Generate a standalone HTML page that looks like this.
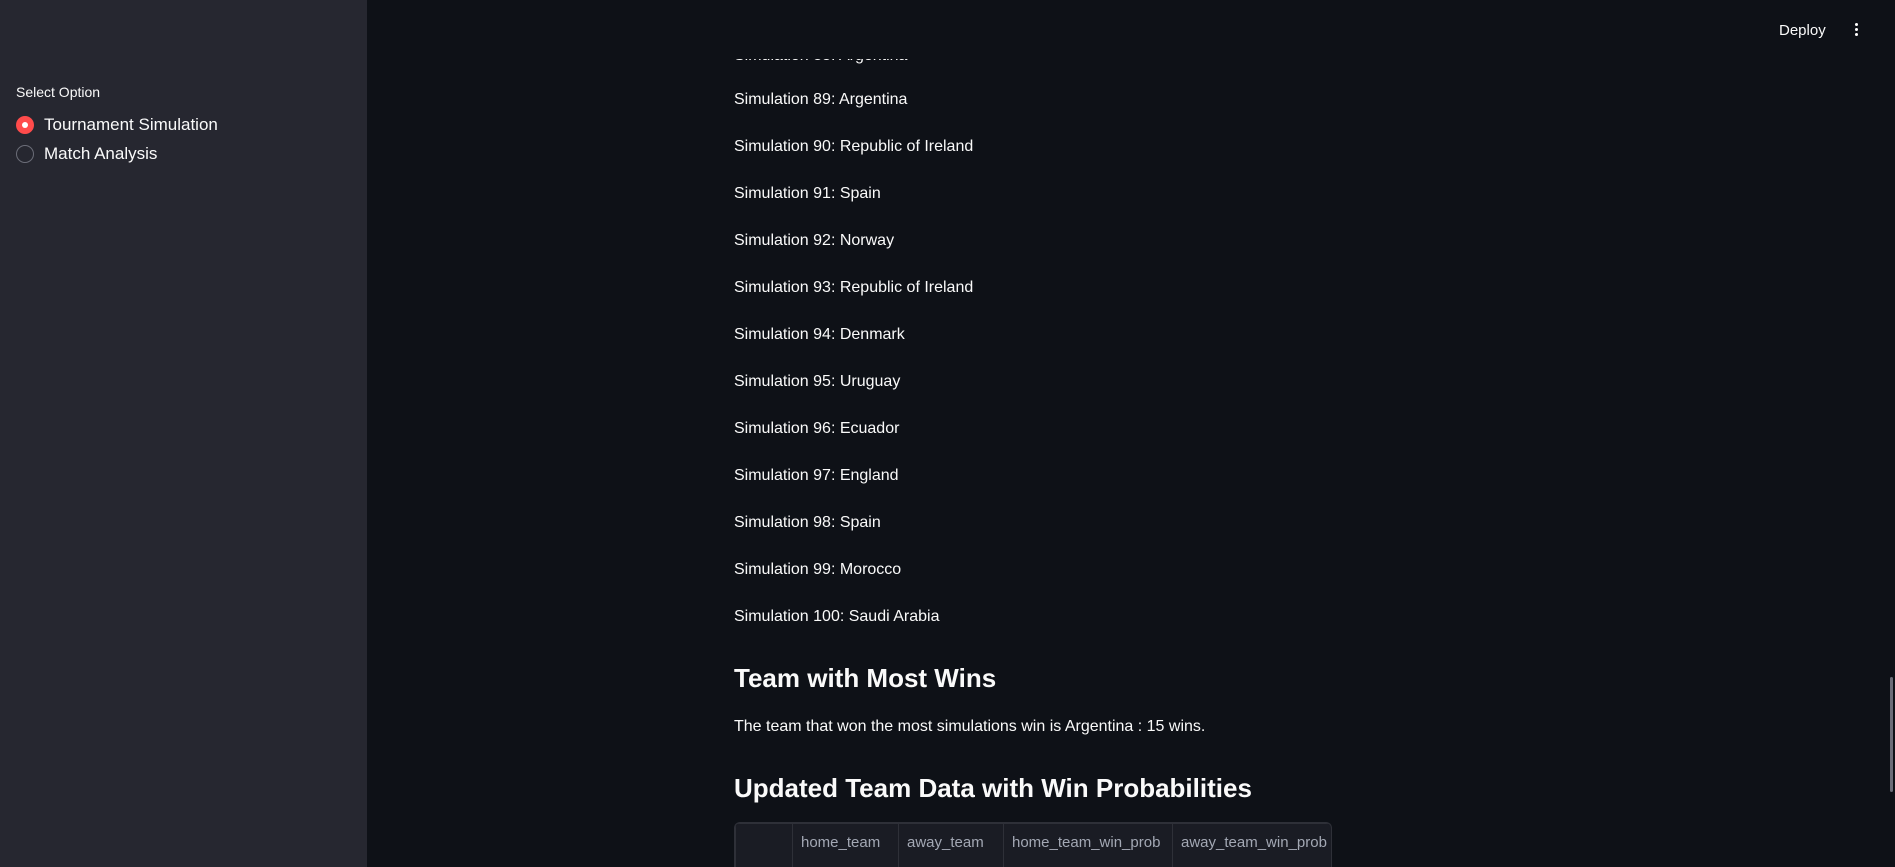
<!DOCTYPE html>
<html><head><meta charset="utf-8"><style>
*{margin:0;padding:0;box-sizing:border-box}
html,body{width:1895px;height:867px;overflow:hidden}
body{background:#0e1117;color:#fafafa;font-family:"Liberation Sans",sans-serif;position:relative}
.sb{position:absolute;left:0;top:0;width:367px;height:867px;background:#262730}
.lbl{position:absolute;left:16px;top:84px;font-size:14px}
.r{position:absolute;left:16px;font-size:17px;display:flex;align-items:center}
.c{width:18px;height:18px;border-radius:50%;border:1px solid #6b6d78;margin-right:10px}
.c.on{background:#ff4b4b;border:none;position:relative}
.c.on:after{content:"";position:absolute;left:6px;top:6px;width:6px;height:6px;border-radius:50%;background:#fff}
.p{position:absolute;left:734px;font-size:16px}
h3{position:absolute;left:734px;font-size:26px;font-weight:bold}
.tb{position:absolute;left:734px;top:822px;width:598px;height:45px;border:1px solid #2e3038;border-bottom:none;border-radius:6px 6px 0 0;background:#1a1c24;overflow:hidden}
.tb div{position:absolute;top:0;height:45px;border-left:1px solid #2e3038;color:#a3a8b4;font-size:15px;padding:11px 8px}
.hl{position:absolute;left:0;top:40px;width:100%;border-top:1px solid #2e3038}
</style></head><body>
<div class="sb">
<div class="lbl">Select Option</div>
<div class="r" style="top:115px"><span class="c on"></span>Tournament Simulation</div>
<div class="r" style="top:144px"><span class="c"></span>Match Analysis</div>
</div>
<div class="p" style="top:47px;clip-path:inset(12px 0 0 0)">Simulation 88: Argentina</div>
<div class="p" style="top:91px">Simulation 89: Argentina</div>
<div class="p" style="top:138px">Simulation 90: Republic of Ireland</div>
<div class="p" style="top:185px">Simulation 91: Spain</div>
<div class="p" style="top:232px">Simulation 92: Norway</div>
<div class="p" style="top:279px">Simulation 93: Republic of Ireland</div>
<div class="p" style="top:326px">Simulation 94: Denmark</div>
<div class="p" style="top:373px">Simulation 95: Uruguay</div>
<div class="p" style="top:420px">Simulation 96: Ecuador</div>
<div class="p" style="top:467px">Simulation 97: England</div>
<div class="p" style="top:514px">Simulation 98: Spain</div>
<div class="p" style="top:561px">Simulation 99: Morocco</div>
<div class="p" style="top:608px">Simulation 100: Saudi Arabia</div>
<div style="position:absolute;left:1779px;top:22px;font-size:15px">Deploy</div>
<div style="position:absolute;left:1855px;top:23px;width:3px">
<div style="width:3px;height:3px;background:#fff;border-radius:50%;margin-bottom:2px"></div><div style="width:3px;height:3px;background:#fff;border-radius:50%;margin-bottom:2px"></div><div style="width:3px;height:3px;background:#fff;border-radius:50%"></div></div>
<h3 style="top:663px">Team with Most Wins</h3>
<div class="p" style="top:718px">The team that won the most simulations win is Argentina : 15 wins.</div>
<h3 style="top:773px">Updated Team Data with Win Probabilities</h3>
<div class="tb">
<div style="left:57px;width:106px">home_team</div>
<div style="left:163px;width:105px">away_team</div>
<div style="left:268px;width:169px">home_team_win_prob</div>
<div style="left:437px;width:160px">away_team_win_prob</div>
<div class="hl"></div>
</div>
<div style="position:absolute;left:1890px;top:677px;width:3px;height:115px;background:#6b6d78;border-radius:2px"></div>
</body></html>
